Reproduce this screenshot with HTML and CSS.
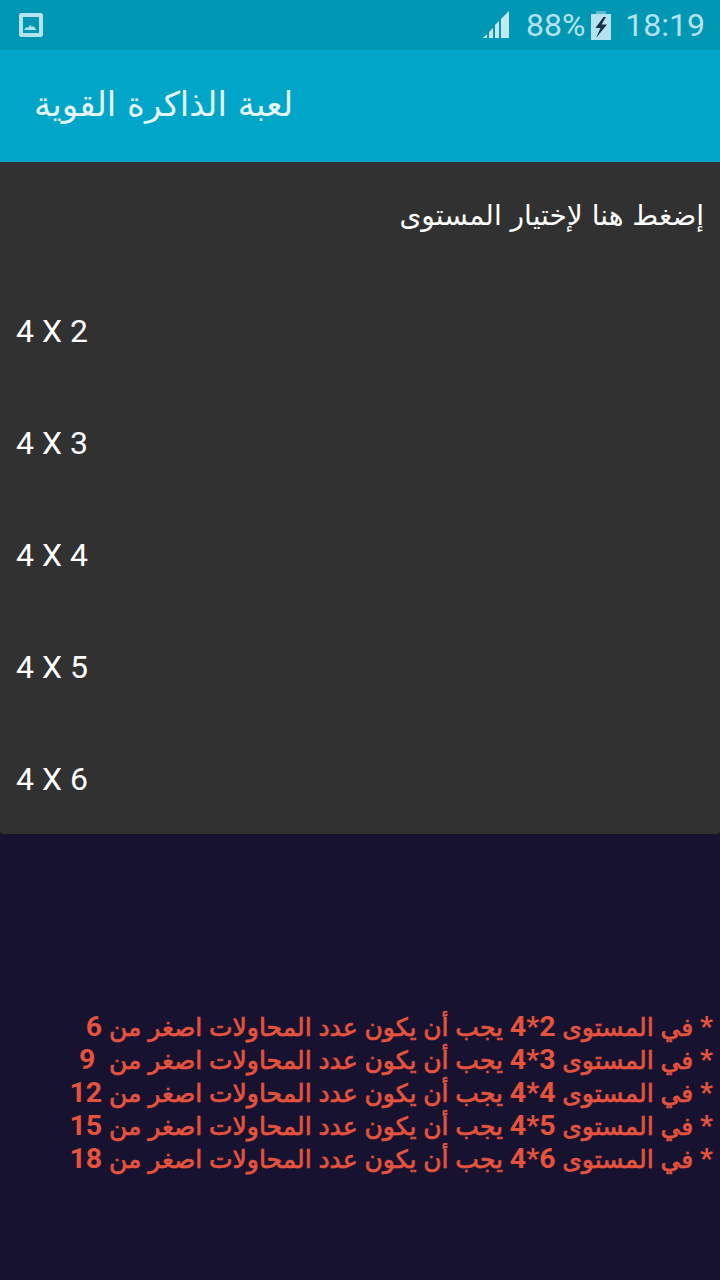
FILE: index.html
```
<!DOCTYPE html>
<html lang="ar">
<head>
<meta charset="utf-8">
<title>لعبة الذاكرة القوية</title>
<link rel="stylesheet" href="styles.css">
</head>
<body>
<div class="status">
  <svg class="pic" width="26" height="26" viewBox="0 0 26 26"><rect x="1" y="1" width="24" height="24" rx="2.5" fill="#b4e2ee"/><rect x="5" y="5" width="16" height="16" fill="#0097b5"/><path d="M6 18l2.500-3 1.500 1 2-3 2 2 1.500-1 3 4z" fill="#b4e2ee"/></svg>
  <div class="status-right">
    <svg class="signal" width="28" height="28" viewBox="0 0 28 28"><path d="M1 27l4-4v4zM7 27v-6l4-4v10zM13 27V14l4-4v17zM19 27V8l8-8v27z" fill="#c4e8f1"/></svg>
    <span class="pct">88%</span>
    <svg class="batt" width="20" height="29" viewBox="0 0 20 29"><rect x="5" y="0" width="10" height="3" fill="#5fb9ce"/><rect x="0" y="3" width="20" height="26" fill="#b4e2ee"/><path d="M12.500 6L4.500 17h5L5 27 16 13.500h-5.500L15 6z" fill="#15323f"/></svg>
    <span class="time">18:19</span>
  </div>
</div>
<header class="appbar"><h1 class="title">لعبة الذاكرة القوية</h1></header>
<nav class="menu">
  <div class="menu-head">إضغط هنا لإختيار المستوى</div>
  <div class="item">4 X 2</div>
  <div class="item">4 X 3</div>
  <div class="item">4 X 4</div>
  <div class="item">4 X 5</div>
  <div class="item">4 X 6</div>
</nav>
<section class="rules">
  <p class="rule"><span class="num">*</span> في المستوى <span class="num">2*4</span> يجب أن يكون عدد المحاولات اصغر من <span class="num">6</span></p>
  <p class="rule"><span class="num">*</span> في المستوى <span class="num">3*4</span> يجب أن يكون عدد المحاولات اصغر من&nbsp; <span class="num">9</span></p>
  <p class="rule"><span class="num">*</span> في المستوى <span class="num">4*4</span> يجب أن يكون عدد المحاولات اصغر من <span class="num">12</span></p>
  <p class="rule"><span class="num">*</span> في المستوى <span class="num">5*4</span> يجب أن يكون عدد المحاولات اصغر من <span class="num">15</span></p>
  <p class="rule"><span class="num">*</span> في المستوى <span class="num">6*4</span> يجب أن يكون عدد المحاولات اصغر من <span class="num">18</span></p>
</section>
</body>
</html>
```
FILE: styles.css
```
* { box-sizing: border-box; }
html, body { margin: 0; padding: 0; }
body {
  width: 720px;
  height: 1280px;
  overflow: hidden;
  background: #171230;
  font-family: Roboto, "DejaVu Sans", sans-serif;
}
.status {
  height: 50px;
  background: #0097b5;
  display: flex;
  align-items: center;
  justify-content: space-between;
  padding: 0 15px 0 18px;
}
.status-right { display: flex; align-items: center; }
.signal { margin-right: 16px; }
.pct, .time { color: #b4e2ee; font-size: 32px; }
.batt { margin: 0 0 0 6px; }
.time { margin-left: 14px; }
.appbar {
  height: 112px;
  background: #00a5c8;
  display: flex;
  align-items: center;
  padding: 0 0 4px 34px;
}
.title {
  margin: 0;
  font-size: 34px;
  font-weight: 400;
  color: #e4f6fa;
  font-family: "DejaVu Sans", sans-serif;
}
.menu {
  height: 672px;
  background: #313131;
  border-radius: 0 0 4px 4px;
  color: #fff;
}
.menu-head {
  height: 112px;
  display: flex;
  align-items: center;
  direction: rtl;
  padding: 0 16px 6px;
  font-size: 28px;
  font-family: "DejaVu Sans", sans-serif;
}
.item {
  height: 112px;
  display: flex;
  align-items: center;
  padding: 1px 16px 0;
  font-size: 32px;
}
.rules { padding: 177px 7px 0 0; }
.rule {
  margin: 0;
  direction: rtl;
  color: #e5533d;
  font-size: 25px;
  font-weight: 400;
  line-height: 33px;
  word-spacing: 0.6px;
  white-space: nowrap;
  -webkit-text-stroke: 0.7px #e5533d;
}
.num {
  font-size: 28.500px;
  line-height: 1;
  font-weight: 700;
  -webkit-text-stroke: 0;
}
```
